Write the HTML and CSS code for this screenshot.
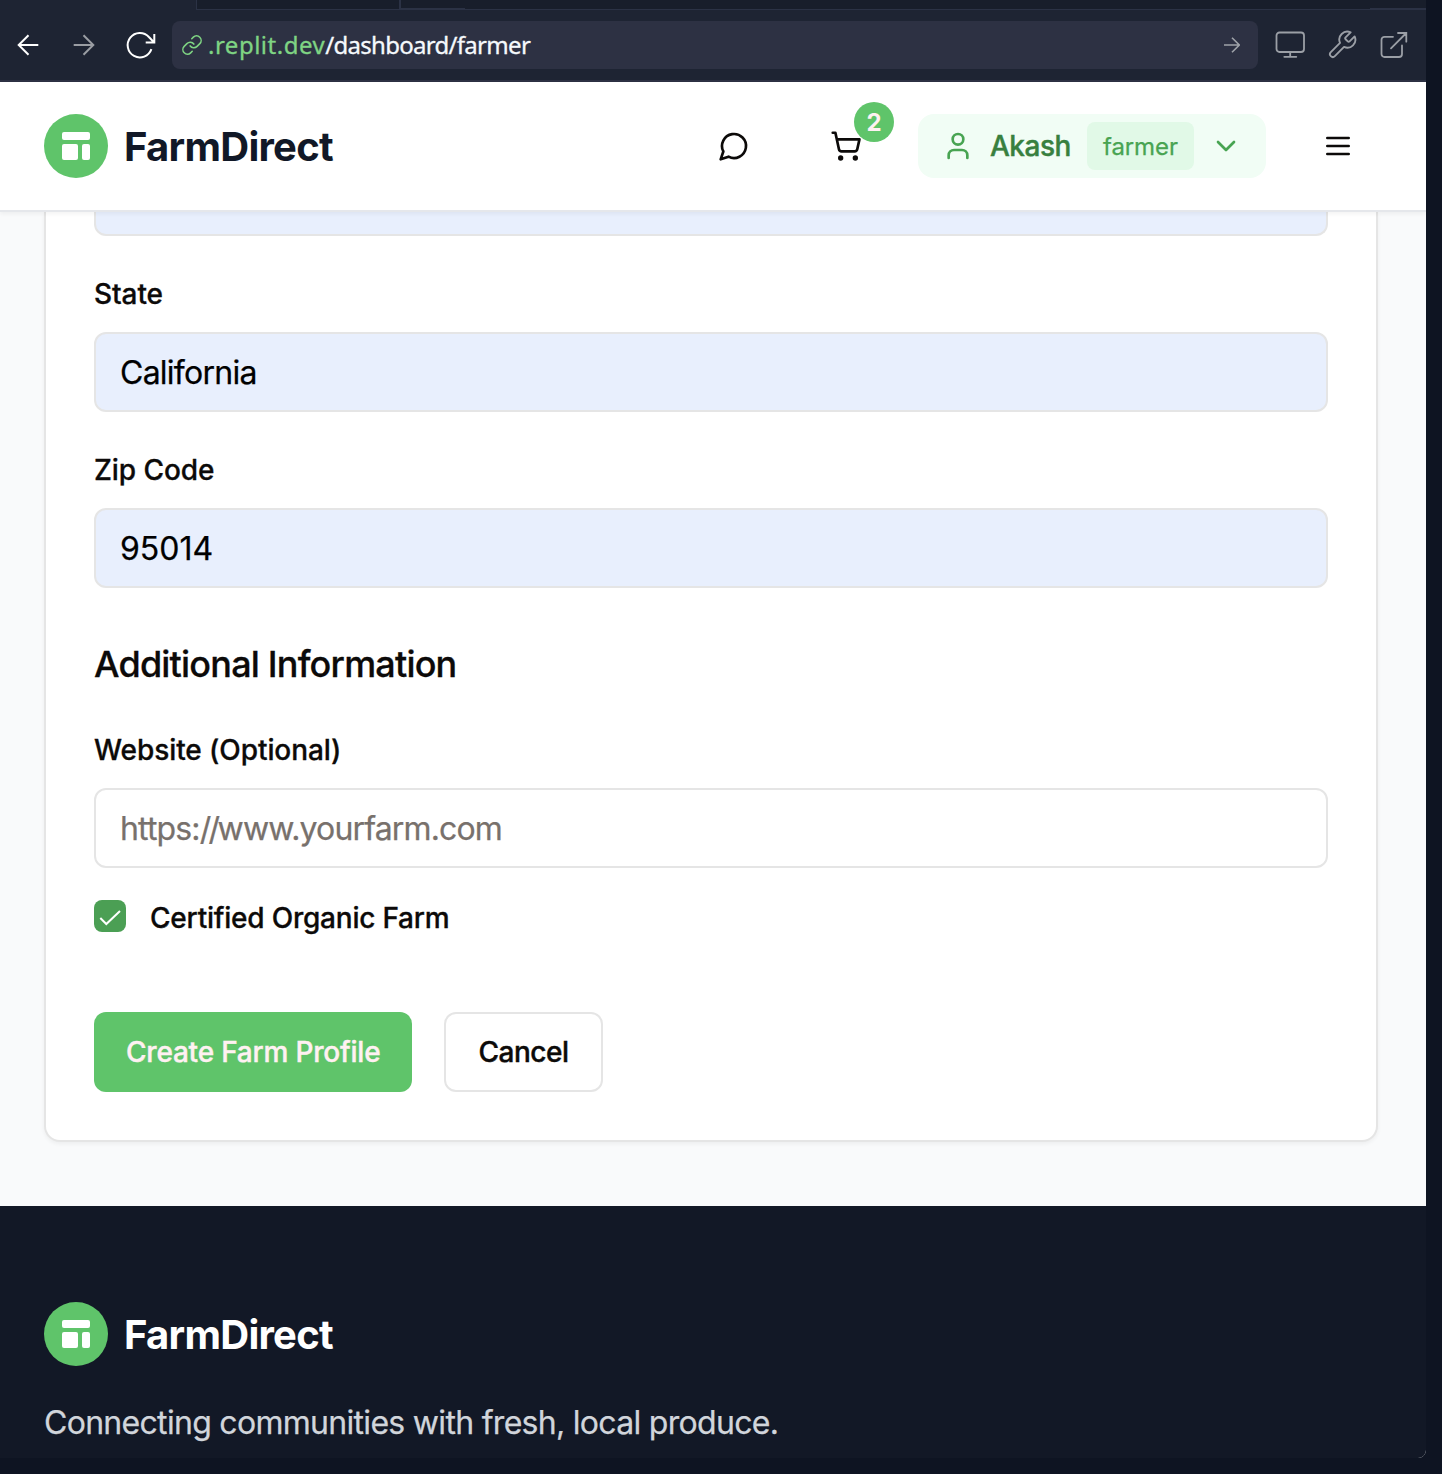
FILE: index.html
```html
<!DOCTYPE html>
<html lang="en">
<head>
<meta charset="utf-8">
<title>FarmDirect – Farmer Dashboard</title>
<link rel="stylesheet" href="styles.css">
</head>
<body>
<svg class="defs" width="0" height="0" aria-hidden="true">
  <symbol id="logo" viewBox="0 0 64 64">
    <circle cx="32" cy="32" r="32" fill="#5fc46a"/>
    <g fill="#fff"><rect x="18" y="18" width="28" height="8" rx="2"/><rect x="18" y="30" width="16" height="16" rx="2"/><rect x="38" y="30" width="8" height="16" rx="2"/></g>
  </symbol>
</svg>
<div class="window">
  <div class="tabs"><span class="tab tab-first"></span><span class="tab tab-active"></span><span class="tab tab-wide"></span><span class="tab tab-end"></span></div>
  <div class="toolbar">
    <svg class="nav back" viewBox="0 0 24 24"><path d="M22.3 12H2.5M12.5 2.2 2.7 12l9.8 9.8"/></svg>
    <svg class="nav forward" viewBox="0 0 24 24"><path d="M1.7 12h19.8M11.5 2.2l9.8 9.8-9.8 9.8"/></svg>
    <svg class="nav reload" viewBox="0 0 32 32"><path d="M27.4 20.2A12.2 12.2 0 1 1 24.9 8l5 5.2M30.3 5v8.5h-8.6"/></svg>
    <div class="address">
      <svg class="link" viewBox="0 0 24 24"><path d="M10 13a5 5 0 0 0 7.54.54l3-3a5 5 0 0 0-7.07-7.07l-1.72 1.71"/><path d="M14 11a5 5 0 0 0-7.54-.54l-3 3a5 5 0 0 0 7.07 7.07l1.71-1.71"/></svg>
      <span class="url"><span class="host">.replit.dev</span>/dashboard/farmer</span>
      <svg class="go" viewBox="0 0 16 16"><path d="M0 8h15.3M8 .7 15.3 8 8 15.3"/></svg>
    </div>
    <svg class="tool monitor" viewBox="0 0 32 32"><rect x="2.5" y="3.5" width="27.5" height="19.5" rx="3"/><path d="M16.2 23v4.8M10.3 27.8h12"/></svg>
    <svg class="tool wrench" viewBox="0 0 24 24"><path d="M14.7 6.3a1 1 0 0 0 0 1.4l1.6 1.6a1 1 0 0 0 1.4 0l3.77-3.77a6 6 0 0 1-7.94 7.94l-6.91 6.91a2.12 2.12 0 0 1-3-3l6.91-6.91a6 6 0 0 1 7.94-7.94z"/></svg>
    <svg class="tool external" viewBox="0 0 32 32"><path d="M15 7.8H6.5a3 3 0 0 0-3 3V25a3 3 0 0 0 3 3H21a3 3 0 0 0 3-3v-8.5M20 4h8.3v8.7M28.3 4 13 19.3"/></svg>
  </div>
  <header class="header">
    <div class="brand"><svg class="logo"><use href="#logo"/></svg><span class="brand-name">FarmDirect</span></div>
    <div class="actions">
      <svg class="icon chat" viewBox="0 0 24 24"><path d="M7.9 20A9 9 0 1 0 4 16.1L2 22Z"/></svg>
      <div class="cart">
        <svg class="icon" viewBox="0 0 24 24"><circle cx="8" cy="21" r="1"/><circle cx="19" cy="21" r="1"/><path d="M2.05 2.05h2l2.66 12.42a2 2 0 0 0 2 1.58h9.78a2 2 0 0 0 1.95-1.57l1.65-7.43H5.12"/></svg>
        <span class="badge">2</span>
      </div>
      <div class="user">
        <svg class="icon" viewBox="0 0 24 24"><path d="M19 21v-2a4 4 0 0 0-4-4H9a4 4 0 0 0-4 4v2"/><circle cx="12" cy="7" r="4"/></svg>
        <span class="user-name">Akash</span>
        <span class="role">farmer</span>
        <svg class="icon" viewBox="0 0 24 24"><path d="m6 9 6 6 6-6"/></svg>
      </div>
      <svg class="icon menu" viewBox="0 0 24 24"><path d="M4 6h16M4 12h16M4 18h16"/></svg>
    </div>
  </header>
  <main class="main">
    <form class="card">
      <div class="input filled clipped"></div>
      <label class="label">State</label>
      <div class="input filled">California</div>
      <label class="label">Zip Code</label>
      <div class="input filled digits">95014</div>
      <h3 class="heading">Additional Information</h3>
      <label class="label">Website (Optional)</label>
      <div class="input placeholder">https:<span class="slashes">//</span>www.yourfarm.com</div>
      <div class="check-row">
        <span class="checkbox"><svg viewBox="0 0 32 32"><path d="M6.3 18l6 6L26 11"/></svg></span>
        <span class="check-label">Certified Organic Farm</span>
      </div>
      <div class="buttons">
        <div class="button primary">Create Farm Profile</div>
        <div class="button outline">Cancel</div>
      </div>
    </form>
  </main>
  <footer class="footer">
    <div class="brand"><svg class="logo"><use href="#logo"/></svg><span class="brand-name">FarmDirect</span></div>
    <p class="tagline">Connecting communities with fresh, local produce.</p>
  </footer>
</div>
</body>
</html>
```
FILE: styles.css
```css
* { box-sizing: border-box; }
body {
  margin: 0;
  width: 1442px;
  height: 1474px;
  overflow: hidden;
  background: #0e1422;
  font-family: Inter, "Liberation Sans", sans-serif;
  color: #0c0a09;
}
svg { display: block; flex: none; fill: none; stroke: currentColor; stroke-linecap: round; stroke-linejoin: round; }
.defs { position: absolute; }
.logo { stroke: none; width: 64px; height: 64px; }
span { white-space: nowrap; }
.window {
  width: 1426px;
  height: 1458px;
  display: flex;
  flex-direction: column;
  overflow: hidden;
  border-radius: 0 0 8px 0;
  background: #f9fafb;
}

/* Browser chrome */
.tabs { height: 10px; display: flex; background: #1e2433; flex: none; }
.tab { background: #181e2b; border-bottom: 1px solid #2b3245; }
.tab-first { margin-left: 196px; width: 204px; border-left: 1px solid #2b3245; border-right: 1px solid #2b3245; }
.tab-active { width: 65px; border-left: 1px solid #2b3245; border-bottom-width: 2px; }
.tab-wide { width: 905px; }
.tab-end { width: 56px; border-bottom-width: 2px; }
.toolbar {
  height: 72px;
  flex: none;
  display: flex;
  align-items: center;
  background: #1e2433;
  border-bottom: 2px solid #2d3143;
  padding-left: 16px;
}
.nav { color: #fff; stroke-width: 2; stroke-linecap: butt; stroke-linejoin: miter; }
.back, .forward { width: 24px; height: 24px; }
.forward { margin-left: 32px; color: #9a9da3; }
.reload { width: 32px; height: 32px; margin-left: 28px; }
.address {
  width: 1086px;
  height: 48px;
  margin-left: 16px;
  padding: 0 18px 0 9px;
  display: flex;
  align-items: center;
  background: #2d3143;
  border-radius: 8px;
}
.link { width: 22px; height: 22px; stroke-width: 1.7; color: #7fd483; }
.url { margin-left: 5px; padding-bottom: 1px; flex: 1; font: 400 24px "Noto Sans", sans-serif; color: #f5f9fc; letter-spacing: -0.7px; -webkit-text-stroke: .3px; }
.host { color: #7fd483; letter-spacing: .5px; }
.go { width: 16px; height: 16px; color: #9fa3a9; stroke-width: 1.6; stroke-linecap: butt; stroke-linejoin: miter; }
.tool { width: 32px; height: 32px; stroke-width: 1.8; color: #9b9fa6; }
.monitor { margin-left: 16px; }
.wrench { margin-left: 20px; stroke-width: 1.4; }
.external { margin-left: 20px; stroke-linejoin: miter; }

/* Site header */
.header {
  height: 130px;
  flex: none;
  display: flex;
  align-items: center;
  justify-content: space-between;
  padding: 0 72px 0 44px;
  background: #fff;
  border-bottom: 2px solid #e5e7eb;
  box-shadow: 0 2px 4px rgba(0, 0, 0, .05);
  z-index: 1;
}
.brand { display: flex; align-items: center; gap: 16px; }
.brand-name { font-size: 40px; font-weight: 700; line-height: 56px; letter-spacing: -.72px; color: #111827; padding-top: 2px; }
.actions { display: flex; align-items: center; }
.icon { width: 32px; height: 32px; stroke-width: 2; }
.cart { position: relative; margin-left: 80px; }
.badge {
  position: absolute;
  left: 24px;
  top: -28px;
  width: 40px;
  height: 40px;
  border-radius: 50%;
  background: #5fc46a;
  color: #fff1f2;
  font-size: 24px;
  font-weight: 700;
  line-height: 42px;
  text-align: center;
}
.user {
  width: 348px;
  height: 64px;
  margin-left: 56px;
  padding: 0 24px;
  display: flex;
  align-items: center;
  border-radius: 16px;
  background: #f1fdf5;
  color: #48a452;
}
.user-name { width: 81px; margin-left: 16px; font-size: 28px; font-weight: 500; color: #38803f; letter-spacing: -0.5px; -webkit-text-stroke: .4px; }
.role {
  width: 107px;
  height: 48px;
  margin: 0 16px;
  padding-left: 16px;
  border-radius: 8px;
  background: #e1f9e7;
  font-size: 24px;
  line-height: 50px;
  letter-spacing: -.1px;
  -webkit-text-stroke: .25px;
}
.menu { margin-left: 56px; }

/* Form */
.main { height: 994px; flex: none; padding: 0 48px 0 44px; background: #f9fafb; }
.card {
  height: 930px;
  padding: 0 48px;
  background: #fff;
  border: 2px solid #e5e5e5;
  border-top: 0;
  border-radius: 0 0 16px 16px;
  box-shadow: 0 2px 4px rgba(0, 0, 0, .05);
}
.input {
  height: 80px;
  padding: 0 24px;
  border: 2px solid #e5e5e5;
  border-radius: 12px;
  font-size: 32px;
  line-height: 78px;
  letter-spacing: -.75px;
  color: #000;
  -webkit-text-stroke: .25px;
}
.filled { background: #e8effd; }
.digits { letter-spacing: 0; }
.clipped { height: 24px; border-top: 0; border-radius: 0 0 12px 12px; }
.label { display: block; height: 28px; margin: 44px 0 24px; font-size: 28px; line-height: 28px; font-weight: 500; letter-spacing: -.08px; -webkit-text-stroke: .3px; }
.heading { margin: 56px 0 0; font-size: 36px; font-weight: 500; line-height: 40px; letter-spacing: -.8px; -webkit-text-stroke: .3px; }
.heading + .label { margin-top: 52px; }
.placeholder { color: #78716c; letter-spacing: -.85px; }
.slashes { letter-spacing: -2.6px; }
.check-row { display: flex; align-items: center; gap: 24px; margin-top: 32px; height: 32px; font-size: 28px; font-weight: 500; letter-spacing: -.22px; -webkit-text-stroke: .3px; }
.checkbox { width: 32px; height: 32px; border-radius: 8px; background: #4b9f54; color: #fff; }
.checkbox svg { stroke-width: 2; stroke-linecap: butt; stroke-linejoin: miter; }
.check-label { padding-top: 4px; }
.buttons { display: flex; gap: 32px; margin-top: 80px; font-size: 28px; font-weight: 500; line-height: 80px; -webkit-text-stroke: .4px; }
.button { height: 80px; border-radius: 12px; }
.primary { width: 318px; padding-left: 32px; background: #5fc46a; color: #fff1f2; letter-spacing: -.21px; }
.outline { width: 159px; padding-left: 32.5px; border: 2px solid #e5e5e5; line-height: 77px; letter-spacing: -.5px; }

/* Footer */
.footer { height: 252px; flex: none; padding: 96px 44px 0; background: #121826; }
.footer .brand-name { color: #fff; }
.tagline { margin: 35px 0 0; font-size: 32px; line-height: 44px; letter-spacing: -.7px; color: #d1d5db; -webkit-text-stroke: .25px; }
```
